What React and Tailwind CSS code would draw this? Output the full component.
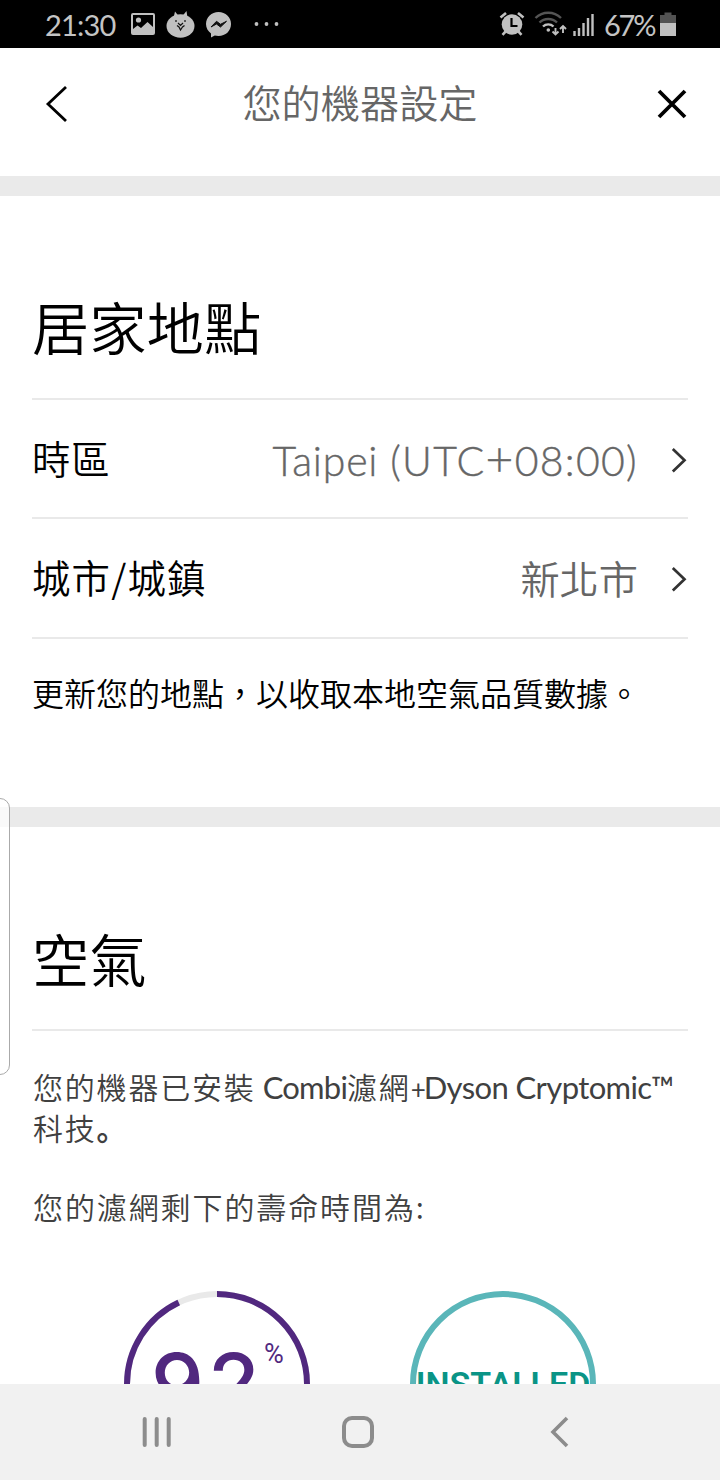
import React from "react";

const Chevron = () => (
  <svg className="ml-[32px] h-7 w-[18px] translate-y-px" viewBox="0 0 18 28" fill="none">
    <path d="M2.800 3L14.500 14.200 2.800 25.400" stroke="#333" strokeWidth="2.700" />
  </svg>
);

const StatusBar = () => (
  <div className="flex h-12 shrink-0 items-center bg-black pl-[45px] font-['Lato','Noto_Sans_CJK_TC',sans-serif] font-normal text-[#c4c4c4]">
    <span className="w-[85px] pt-0.5 text-[29px] leading-[46px] tracking-[-0.800px]">21:30</span>
    <svg className="h-12 w-[150px]" viewBox="130 0 150 48" fill="#c0c0c0">
      {/* picture */}
      <path
        fillRule="evenodd"
        d="M133 13h20a2 2 0 0 1 2 2v18a2 2 0 0 1-2 2h-20a2 2 0 0 1-2-2v-18a2 2 0 0 1 2-2zM133 15v14l4.500-3.500 3.500 2.500 6.500-6 5.500 5v-12z"
      />
      <circle cx="138.500" cy="20" r="2.600" />
      {/* cat */}
      <ellipse cx="180.500" cy="26" rx="14" ry="11.800" />
      <path d="M173.500 18l1.500-6.500 4 5zM187.500 18l-1-7-4.500 5.500z" />
      <g stroke="#111" fill="none" strokeWidth="1.200">
        <path d="M176 20v2M185 20v2M178 23l2.500 2.500 2.500-2.500M177 25.500l2 1.500 1.500 3 2-3 2-1.500" />
      </g>
      {/* messenger */}
      <path d="M218.500 12c7 0 12.500 5 12.500 12s-5.500 12-12.500 12c-1.500 0-2.500-.2-3.700-.5L211 37.500v-4c-3-2.300-5-5.500-5-9.500 0-7 5.500-12 12.500-12z" />
      <path d="M211 27l5.500-5.700 4 3 6-3-6 5.700-4-3z" fill="#111" stroke="#111" />
      <circle cx="256.500" cy="24" r="1.900" />
      <circle cx="266.500" cy="24" r="1.900" />
      <circle cx="276.500" cy="24" r="1.900" />
    </svg>
    <svg className="ml-[216px] h-12 w-[106px]" viewBox="496 0 106 48" fill="none" stroke="#c0c0c0">
      {/* alarm */}
      <circle cx="512" cy="24.500" r="10.300" fill="#c0c0c0" stroke="none" />
      <path d="M500.500 17.500l5.500-4.500M518 13l5.500 4.500M506 31l-3.500 3.800M518 31l3.500 3.800" strokeWidth="2.600" />
      <path d="M511.500 18v8h6" stroke="#000" strokeWidth="2.200" />
      {/* wifi */}
      <path d="M535.500 18a18 18 0 0 1 25.500 0M539.500 22.500a12.500 12.500 0 0 1 17.500 0" stroke="#555" strokeWidth="2.400" />
      <path d="M543 26.500a7.500 7.500 0 0 1 10.500 0" strokeWidth="2.400" />
      <circle cx="548.300" cy="30" r="1.800" fill="#c0c0c0" stroke="none" />
      <path d="M555.500 28v6M552.500 31.500l3 3 3-3M563 33v-6M560 29l3-3 3 3" strokeWidth="1.900" />
      {/* signal */}
      <path d="M574.500 31v5M579 28v8M583.500 23v13M588 18v18M592.500 14v22" strokeWidth="2.400" />
    </svg>
    <span className="w-[58px] pt-0.5 pl-[2px] text-[29px] leading-[46px] tracking-[-2.200px]">67%</span>
    <svg className="h-12 w-[17px]" viewBox="660 0 17 48">
      <path d="M664.500 12.500h7v2.500h4.500v8h-16v-8h4.500z" fill="#525252" />
      <path d="M660 23h16v13h-16z" fill="#c0c0c0" />
    </svg>
  </div>
);

const Header = () => (
  <header className="flex h-32 shrink-0 items-start justify-between bg-white pr-[32px] pl-[44px] pt-9">
    <svg className="h-10 w-7" viewBox="0 0 28 40" fill="none" stroke="#000" strokeWidth="2.8">
      <path d="M22 3L4 20l18 17" />
    </svg>
    <h1 className="-mt-[3px] mr-[8px] text-[39.200px] leading-10 text-[#666]">您的機器設定</h1>
    <svg className="h-10 w-8" viewBox="0 0 32 40" fill="none" stroke="#000" strokeWidth="3.8">
      <path d="M3 7l26 26M29 7L3 33" />
    </svg>
  </header>
);

const HomeLocation = () => (
  <section className="h-[611px] shrink-0 px-8 text-black">
    <h2 className="h-[202px] pt-[98px] text-[57.300px] leading-[64px]">居家地點</h2>
    <div className="flex h-[119px] items-center border-t-2 border-[#e9e9e9]">
      <span className="grow pb-0.5 text-[38.400px] tracking-[0.800px]">時區</span>
      <span className="pt-1 font-['Lato'] text-[41px] font-light tracking-[1.300px] text-[#666] [-webkit-text-stroke:0.4px_#666]">
        <span className="tracking-[0.800px]">Taipei </span>(UTC
        <span className="text-[48px] leading-10">+</span>08:00)
      </span>
      <Chevron />
    </div>
    <div className="flex h-[120px] items-center border-t-2 border-[#e9e9e9]">
      <span className="grow pb-0.5 text-[38.400px] tracking-[1.200px]">城市/城鎮</span>
      <span className="pb-0.5 text-[39.200px] text-[#666]">新北市</span>
      <Chevron />
    </div>
    <p className="border-t-2 border-[#e9e9e9] pt-[29px] text-[32px] leading-[48px] whitespace-nowrap">
      更新您的地點，以收取本地空氣品質數據。
    </p>
  </section>
);

const FilterRings = () => (
  <div className="mt-[64px] flex gap-[100px] pl-[92px]">
    <div className="relative h-[186px] w-[186px] shrink-0">
      <svg className="absolute inset-0" viewBox="0 0 186 186" fill="none" strokeWidth="6">
        <circle cx="93" cy="93" r="90" stroke="#e9e9e9" />
        <circle
          cx="93"
          cy="93"
          r="90"
          stroke="#51287f"
          pathLength="100"
          strokeDasharray="93 7"
          transform="rotate(-90 93 93)"
        />
      </svg>
      <span className="absolute top-[48px] left-[27px] font-['Inter'] text-[84px] leading-[90px] font-medium tracking-[4px] text-[#51287f]">
        92
      </span>
      <span className="absolute top-[46px] left-[140px] font-['Roboto'] text-[27px] leading-[34px] font-normal text-[#51287f]">
        %
      </span>
    </div>
    <div className="flex h-[186px] w-[186px] shrink-0 items-center justify-center rounded-full border-[6px] border-[#5ab6b9]">
      <span className="font-['Roboto'] text-[34px] font-semibold text-[#0a9486]">INSTALLED</span>
    </div>
  </div>
);

const Air = () => (
  <section className="h-[557px] shrink-0 overflow-hidden px-8">
    <h2 className="h-[202px] pt-[99px] text-[57.300px] leading-[64px] text-black">空氣</h2>
    <div className="border-t-2 border-[#e9e9e9] pt-[35px] pl-px text-[#404040]">
      <p className="text-[30px] leading-[41px] tracking-[1.800px] whitespace-nowrap">
        您的機器已安裝
        <span className="font-['Lato'] text-[31px] leading-none font-normal tracking-[-0.800px]"> Combi</span>
        濾網
        <span className="font-['Lato'] text-[31px] leading-none font-normal tracking-[-0.600px]">
          <span className="text-[26px] tracking-[-2px]">+</span>Dyson Cryptomic™
        </span>
        <br />
        科技
        <span lang="ja" className="font-['Noto_Sans_CJK_JP'] leading-none font-bold">
          。
        </span>
      </p>
      <p className="mt-[38px] text-[30px] leading-[41px] tracking-[1.900px]">您的濾網剩下的壽命時間為:</p>
    </div>
    <FilterRings />
  </section>
);

const NavBar = () => (
  <nav className="flex h-24 shrink-0 items-center justify-between bg-[#f1f1f1] pr-[148px] pl-[140px]">
    <svg className="h-9 w-[34px]" viewBox="0 0 34 36" stroke="#8c8c8c" strokeWidth="4" strokeLinecap="round">
      <path d="M4.700 5v26M16.700 5v26M28.700 5v26" />
    </svg>
    <div className="mr-[6px] h-8 w-8 rounded-[10px] border-4 border-[#8c8c8c]"></div>
    <svg className="h-9 w-6" viewBox="0 0 24 36" fill="none" stroke="#8c8c8c" strokeWidth="3.600">
      <path d="M19 4L5 18l14 14" />
    </svg>
  </nav>
);

const App = () => {
  return (
    <div
      lang="zh-Hant"
      className="relative flex h-[1480px] w-[720px] flex-col overflow-hidden bg-white font-['Noto_Sans_CJK_TC',sans-serif] font-[350]"
    >
      <StatusBar />
      <Header />
      <div className="h-5 shrink-0 bg-[#eaeaea]"></div>
      <HomeLocation />
      <div className="h-5 shrink-0 bg-[#eaeaea]"></div>
      <Air />
      <NavBar />
      {/* Edge panel handle */}
      <div className="absolute top-[798px] -left-5 h-[277px] w-[30px] rounded-[10px] border border-[#aaa] bg-white/70"></div>
    </div>
  );
};

export default App;
